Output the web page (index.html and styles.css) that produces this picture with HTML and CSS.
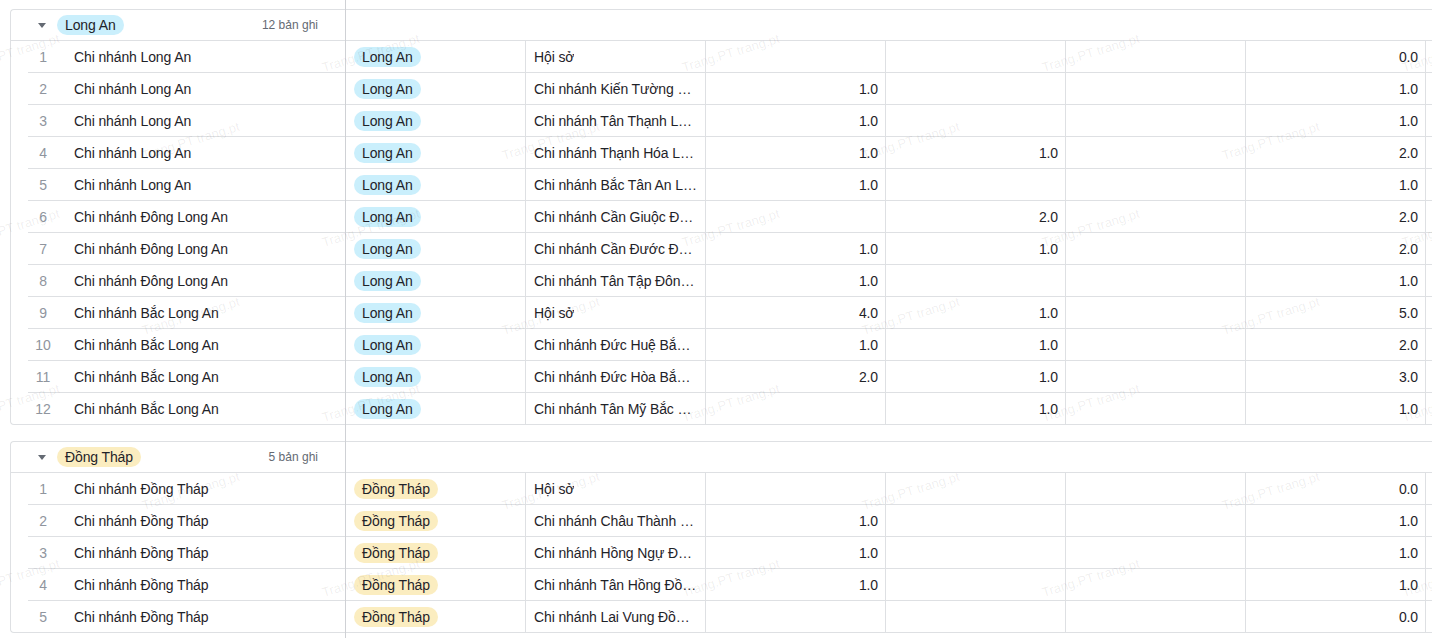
FILE: index.html
```html
<!DOCTYPE html>
<html lang="vi">
<head>
<meta charset="utf-8">
<title>Chi nhánh</title>
<link rel="stylesheet" href="styles.css">
</head>
<body>
<div class="sheet">
  <div class="frozen">
    <section class="lgroup">
      <div class="lhead"><span class="caret"></span><span class="pill blue">Long An</span><span class="count">12 bản ghi</span></div>
      <div class="lrow"><span class="idx">1</span><span class="name">Chi nhánh Long An</span></div>
      <div class="lrow"><span class="idx">2</span><span class="name">Chi nhánh Long An</span></div>
      <div class="lrow"><span class="idx">3</span><span class="name">Chi nhánh Long An</span></div>
      <div class="lrow"><span class="idx">4</span><span class="name">Chi nhánh Long An</span></div>
      <div class="lrow"><span class="idx">5</span><span class="name">Chi nhánh Long An</span></div>
      <div class="lrow"><span class="idx">6</span><span class="name">Chi nhánh Đông Long An</span></div>
      <div class="lrow"><span class="idx">7</span><span class="name">Chi nhánh Đông Long An</span></div>
      <div class="lrow"><span class="idx">8</span><span class="name">Chi nhánh Đông Long An</span></div>
      <div class="lrow"><span class="idx">9</span><span class="name">Chi nhánh Bắc Long An</span></div>
      <div class="lrow"><span class="idx">10</span><span class="name">Chi nhánh Bắc Long An</span></div>
      <div class="lrow"><span class="idx">11</span><span class="name">Chi nhánh Bắc Long An</span></div>
      <div class="lrow"><span class="idx">12</span><span class="name">Chi nhánh Bắc Long An</span></div>
    </section>
    <section class="lgroup">
      <div class="lhead"><span class="caret"></span><span class="pill yellow">Đồng Tháp</span><span class="count">5 bản ghi</span></div>
      <div class="lrow"><span class="idx">1</span><span class="name">Chi nhánh Đồng Tháp</span></div>
      <div class="lrow"><span class="idx">2</span><span class="name">Chi nhánh Đồng Tháp</span></div>
      <div class="lrow"><span class="idx">3</span><span class="name">Chi nhánh Đồng Tháp</span></div>
      <div class="lrow"><span class="idx">4</span><span class="name">Chi nhánh Đồng Tháp</span></div>
      <div class="lrow"><span class="idx">5</span><span class="name">Chi nhánh Đồng Tháp</span></div>
    </section>
  </div>
  <div class="scroll">
    <section class="rgroup">
      <div class="rhead"></div>
      <div class="rrow"><div class="cell"><span class="pill blue">Long An</span></div><div class="cell text"><span class="clip">Hội sở</span></div><div class="cell num"></div><div class="cell num"></div><div class="cell num"></div><div class="cell num">0.0</div><div class="cell"></div></div>
      <div class="rrow"><div class="cell"><span class="pill blue">Long An</span></div><div class="cell text"><span class="clip">Chi nhánh Kiến Tường Long An</span></div><div class="cell num">1.0</div><div class="cell num"></div><div class="cell num"></div><div class="cell num">1.0</div><div class="cell"></div></div>
      <div class="rrow"><div class="cell"><span class="pill blue">Long An</span></div><div class="cell text"><span class="clip">Chi nhánh Tân Thạnh Long An</span></div><div class="cell num">1.0</div><div class="cell num"></div><div class="cell num"></div><div class="cell num">1.0</div><div class="cell"></div></div>
      <div class="rrow"><div class="cell"><span class="pill blue">Long An</span></div><div class="cell text"><span class="clip">Chi nhánh Thạnh Hóa Long An</span></div><div class="cell num">1.0</div><div class="cell num">1.0</div><div class="cell num"></div><div class="cell num">2.0</div><div class="cell"></div></div>
      <div class="rrow"><div class="cell"><span class="pill blue">Long An</span></div><div class="cell text"><span class="clip">Chi nhánh Bắc Tân An Long An</span></div><div class="cell num">1.0</div><div class="cell num"></div><div class="cell num"></div><div class="cell num">1.0</div><div class="cell"></div></div>
      <div class="rrow"><div class="cell"><span class="pill blue">Long An</span></div><div class="cell text"><span class="clip">Chi nhánh Cần Giuộc Đông Long An</span></div><div class="cell num"></div><div class="cell num">2.0</div><div class="cell num"></div><div class="cell num">2.0</div><div class="cell"></div></div>
      <div class="rrow"><div class="cell"><span class="pill blue">Long An</span></div><div class="cell text"><span class="clip">Chi nhánh Cần Đước Đông Long An</span></div><div class="cell num">1.0</div><div class="cell num">1.0</div><div class="cell num"></div><div class="cell num">2.0</div><div class="cell"></div></div>
      <div class="rrow"><div class="cell"><span class="pill blue">Long An</span></div><div class="cell text"><span class="clip">Chi nhánh Tân Tập Đông Long An</span></div><div class="cell num">1.0</div><div class="cell num"></div><div class="cell num"></div><div class="cell num">1.0</div><div class="cell"></div></div>
      <div class="rrow"><div class="cell"><span class="pill blue">Long An</span></div><div class="cell text"><span class="clip">Hội sở</span></div><div class="cell num">4.0</div><div class="cell num">1.0</div><div class="cell num"></div><div class="cell num">5.0</div><div class="cell"></div></div>
      <div class="rrow"><div class="cell"><span class="pill blue">Long An</span></div><div class="cell text"><span class="clip">Chi nhánh Đức Huệ Bắc Long An</span></div><div class="cell num">1.0</div><div class="cell num">1.0</div><div class="cell num"></div><div class="cell num">2.0</div><div class="cell"></div></div>
      <div class="rrow"><div class="cell"><span class="pill blue">Long An</span></div><div class="cell text"><span class="clip">Chi nhánh Đức Hòa Bắc Long An</span></div><div class="cell num">2.0</div><div class="cell num">1.0</div><div class="cell num"></div><div class="cell num">3.0</div><div class="cell"></div></div>
      <div class="rrow"><div class="cell"><span class="pill blue">Long An</span></div><div class="cell text"><span class="clip">Chi nhánh Tân Mỹ Bắc Long An</span></div><div class="cell num"></div><div class="cell num">1.0</div><div class="cell num"></div><div class="cell num">1.0</div><div class="cell"></div></div>
    </section>
    <section class="rgroup">
      <div class="rhead"></div>
      <div class="rrow"><div class="cell"><span class="pill yellow">Đồng Tháp</span></div><div class="cell text"><span class="clip">Hội sở</span></div><div class="cell num"></div><div class="cell num"></div><div class="cell num"></div><div class="cell num">0.0</div><div class="cell"></div></div>
      <div class="rrow"><div class="cell"><span class="pill yellow">Đồng Tháp</span></div><div class="cell text"><span class="clip">Chi nhánh Châu Thành Đồng Tháp</span></div><div class="cell num">1.0</div><div class="cell num"></div><div class="cell num"></div><div class="cell num">1.0</div><div class="cell"></div></div>
      <div class="rrow"><div class="cell"><span class="pill yellow">Đồng Tháp</span></div><div class="cell text"><span class="clip">Chi nhánh Hồng Ngự Đồng Tháp</span></div><div class="cell num">1.0</div><div class="cell num"></div><div class="cell num"></div><div class="cell num">1.0</div><div class="cell"></div></div>
      <div class="rrow"><div class="cell"><span class="pill yellow">Đồng Tháp</span></div><div class="cell text"><span class="clip">Chi nhánh Tân Hồng Đồng Tháp</span></div><div class="cell num">1.0</div><div class="cell num"></div><div class="cell num"></div><div class="cell num">1.0</div><div class="cell"></div></div>
      <div class="rrow"><div class="cell"><span class="pill yellow">Đồng Tháp</span></div><div class="cell text"><span class="clip">Chi nhánh Lai Vung Đồng Tháp</span></div><div class="cell num"></div><div class="cell num"></div><div class="cell num"></div><div class="cell num">0.0</div><div class="cell"></div></div>
    </section>
  </div>
</div>
<div class="wm-layer" aria-hidden="true">
  <div class="wm-row even"><span class="wm">Trang.PT trang.pt</span><span class="wm">Trang.PT trang.pt</span><span class="wm">Trang.PT trang.pt</span><span class="wm">Trang.PT trang.pt</span><span class="wm">Trang.PT trang.pt</span></div>
  <div class="wm-row odd"><span class="wm">Trang.PT trang.pt</span><span class="wm">Trang.PT trang.pt</span><span class="wm">Trang.PT trang.pt</span><span class="wm">Trang.PT trang.pt</span></div>
  <div class="wm-row even"><span class="wm">Trang.PT trang.pt</span><span class="wm">Trang.PT trang.pt</span><span class="wm">Trang.PT trang.pt</span><span class="wm">Trang.PT trang.pt</span><span class="wm">Trang.PT trang.pt</span></div>
  <div class="wm-row odd"><span class="wm">Trang.PT trang.pt</span><span class="wm">Trang.PT trang.pt</span><span class="wm">Trang.PT trang.pt</span><span class="wm">Trang.PT trang.pt</span></div>
  <div class="wm-row even"><span class="wm">Trang.PT trang.pt</span><span class="wm">Trang.PT trang.pt</span><span class="wm">Trang.PT trang.pt</span><span class="wm">Trang.PT trang.pt</span><span class="wm">Trang.PT trang.pt</span></div>
  <div class="wm-row odd"><span class="wm">Trang.PT trang.pt</span><span class="wm">Trang.PT trang.pt</span><span class="wm">Trang.PT trang.pt</span><span class="wm">Trang.PT trang.pt</span></div>
  <div class="wm-row even"><span class="wm">Trang.PT trang.pt</span><span class="wm">Trang.PT trang.pt</span><span class="wm">Trang.PT trang.pt</span><span class="wm">Trang.PT trang.pt</span><span class="wm">Trang.PT trang.pt</span></div>
</div>
</body>
</html>
```

FILE: styles.css
```css
* { box-sizing: border-box; }
html, body {
  margin: 0;
  padding: 0;
  background: #ffffff;
  font-family: "Liberation Sans", Arial, sans-serif;
  font-size: 14px;
  letter-spacing: -0.12px;
  color: #1f2329;
  overflow: hidden;
}
.sheet {
  display: flex;
  min-height: 100vh;
  position: relative;
}
.frozen {
  width: 346px;
  flex: 0 0 346px;
  padding: 9px 0 0 10px;
  border-right: 1px solid #cfd1d5;
}
.scroll {
  flex: 1;
  padding-top: 9px;
  overflow: hidden;
}
.lgroup {
  border: 1px solid #dee0e3;
  border-right: none;
  border-radius: 4px 0 0 4px;
  margin-bottom: 16px;
}
.lhead {
  height: 31px;
  border-bottom: 1px solid #dee0e3;
  display: flex;
  align-items: center;
  padding: 0 27px 0 27px;
}
.caret {
  width: 0;
  height: 0;
  border-left: 4px solid transparent;
  border-right: 4px solid transparent;
  border-top: 5px solid #646a73;
  margin-right: 11px;
}
.count {
  margin-left: auto;
  font-size: 12px;
  letter-spacing: 0;
  color: #646a73;
}
.pill {
  display: inline-block;
  height: 20px;
  line-height: 20px;
  padding: 0 8px;
  border-radius: 10px;
  color: #1f2329;
  white-space: nowrap;
}
.pill.blue { background: #caeffc; }
.pill.yellow { background: #fbedc0; }
.lrow {
  height: 32px;
  margin-left: 17px;
  border-bottom: 1px solid #dee0e3;
  display: flex;
  align-items: center;
}
.lrow:last-child {
  border-bottom: none;
  height: 31px;
}
.idx {
  width: 30px;
  text-align: center;
  color: #8f959e;
}
.name {
  padding-left: 16px;
  white-space: nowrap;
}
.rgroup {
  border-top: 1px solid #dee0e3;
  border-bottom: 1px solid #dee0e3;
  margin-bottom: 16px;
}
.rhead {
  height: 31px;
  border-bottom: 1px solid #dee0e3;
}
.rrow {
  height: 32px;
  border-bottom: 1px solid #dee0e3;
  display: flex;
}
.rrow:last-child {
  border-bottom: none;
  height: 31px;
}
.cell {
  flex: 0 0 180px;
  width: 180px;
  border-right: 1px solid #dee0e3;
  display: flex;
  align-items: center;
  padding: 0 8px;
  white-space: nowrap;
  overflow: hidden;
}
.clip {
  min-width: 0;
  overflow: hidden;
  text-overflow: ellipsis;
  white-space: nowrap;
}
.cell.num {
  justify-content: flex-end;
  padding-right: 7px;
}
.wm-layer {
  position: absolute;
  inset: 0;
  overflow: hidden;
  pointer-events: none;
  padding-top: 8px;
}
.wm-row {
  height: 87.5px;
  display: flex;
  align-items: center;
  white-space: nowrap;
}
.wm-row.even { margin-left: -40px; }
.wm-row.odd { margin-left: 140px; }
.wm {
  flex: 0 0 360px;
  display: inline-block;
  font-size: 13px;
  letter-spacing: 0;
  color: rgba(31, 35, 41, 0.08);
  transform-origin: 55px 50%;
  transform: rotate(-17deg);
}
```
